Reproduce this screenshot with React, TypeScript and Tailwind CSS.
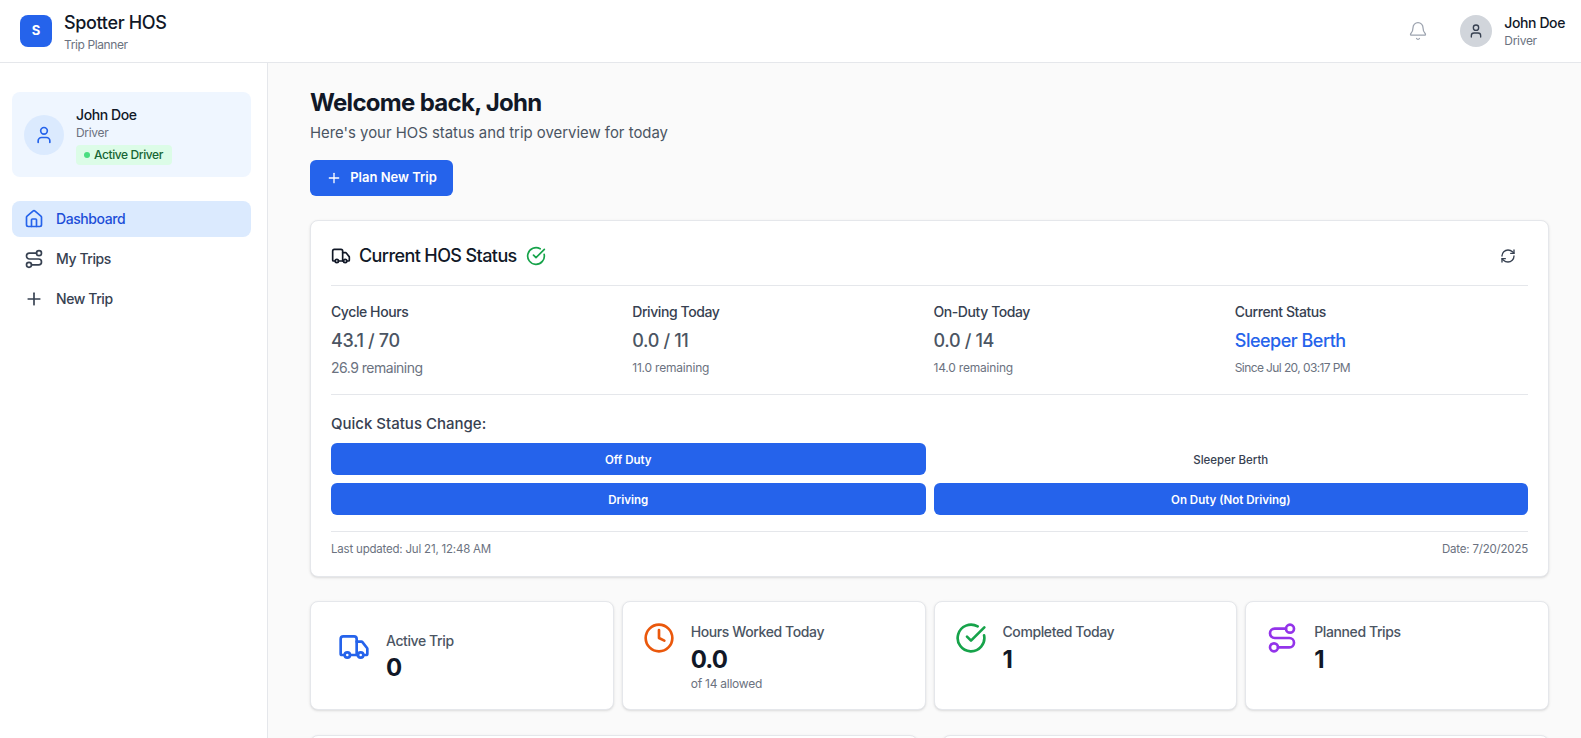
import { Bell, CircleCheckBig, Clock, House, Plus, RefreshCw, Route, Truck, User } from "lucide-react";

const font = { fontFamily: "Inter, 'Noto Sans', sans-serif" };

function Metric({ label, value, sub, big, blue, tight }: { label: string; value: string; sub: string; big?: boolean; blue?: boolean; tight?: boolean }) {
  return (
    <div>
      <div className="text-[14px] leading-5 font-medium tracking-[-0.42px] text-[#374151]">{label}</div>
      <div className={`mt-[5px] text-[18px] leading-7 font-medium ${blue ? "tracking-[-0.5px] text-[#2563eb]" : "tracking-[-0.35px] text-[#4b5563]"}`}>{value}</div>
      <div className={`mt-[3px] leading-5 text-[#6b7280] ${big ? "text-[14px] tracking-[-0.5px]" : tight ? "text-[12px] tracking-[-0.6px]" : "text-[12px] tracking-[-0.2px]"}`}>{sub}</div>
    </div>
  );
}

function Stat({ icon, label, value, sub, first }: { icon: React.ReactNode; label: string; value: string; sub?: string; first?: boolean }) {
  return (
    <div className={`flex h-[109px] items-start gap-4 rounded-lg border border-[#e5e7eb] bg-white shadow-sm ${first ? "px-[27px] pt-[29px]" : "px-5 pt-[20px]"}`}>
      {icon}
      <div>
        <div className="text-[14px] leading-5 font-medium tracking-[-0.4px] text-[#4b5563]">{label}</div>
        <div className={`text-[24px] leading-8 font-bold tracking-[-0.9px] text-[#111827] ${first ? "mt-[1px]" : "mt-[2px]"}`}>{value}</div>
        {sub && <div className="text-[12px] leading-4 tracking-[-0.25px] text-[#6b7280]">{sub}</div>}
      </div>
    </div>
  );
}

export default function App() {
  return (
    <div style={font} className="flex h-screen flex-col overflow-hidden bg-white">
      <header className="flex h-[63px] shrink-0 items-center justify-between border-b border-[#e5e7eb] bg-white pl-5 pr-[16px]">
        <div className="flex items-center gap-3">
          <div className="flex h-8 w-8 items-center justify-center rounded-lg bg-[#2563eb] text-[13px] font-bold text-white">S</div>
          <div>
            <div className="text-[18px] leading-7 font-medium tracking-[-0.35px] text-[#111827]">Spotter HOS</div>
            <div className="text-[12px] leading-4 tracking-[-0.4px] text-[#6b7280]">Trip Planner</div>
          </div>
        </div>
        <div className="flex items-center">
          <Bell className="mr-[32px] h-5 w-5 text-[#9ca3af]" strokeWidth={1.5} />
          <div className="mr-3 flex h-8 w-8 items-center justify-center rounded-full bg-[#d1d5db]">
            <User className="h-4 w-4 text-[#374151]" />
          </div>
          <div>
            <div className="text-[14px] leading-5 font-medium tracking-[-0.4px] text-[#111827]">John Doe</div>
            <div className="text-[12px] leading-4 tracking-[-0.3px] text-[#6b7280]">Driver</div>
          </div>
        </div>
      </header>
      <div className="flex min-h-0 flex-1">
        <aside className="w-[268px] shrink-0 border-r border-[#e5e7eb] bg-white pl-3 pr-4 pt-[29px]">
          <div className="flex h-[85px] items-center gap-3 rounded-lg bg-[#eff6ff] px-3">
            <div className="flex h-10 w-10 items-center justify-center rounded-full bg-[#dbeafe]">
              <User className="h-5 w-5 text-[#2563eb]" />
            </div>
            <div>
              <div className="text-[14px] leading-5 font-medium tracking-[-0.4px] text-[#111827]">John Doe</div>
              <div className="text-[12px] leading-4 tracking-[-0.3px] text-[#6b7280]">Driver</div>
              <div className="mt-[4px] flex h-5 w-[96px] items-center gap-[4px] rounded bg-[#dcfce7] pl-2 text-[12px] font-medium tracking-[-0.4px] text-[#166534]">
                <span className="h-[6px] w-[6px] rounded-full bg-[#4ade80]" />
                Active Driver
              </div>
            </div>
          </div>
          <nav className="mt-6 flex flex-col gap-1 text-[14px] font-medium tracking-[-0.42px]">
            <div className="flex h-9 items-center gap-3 rounded-lg bg-[#dbeafe] px-3 text-[#1d4ed8]">
              <House className="h-5 w-5 text-[#2563eb]" strokeWidth={2} />
              <span className="pb-[1px]">Dashboard</span>
            </div>
            <div className="flex h-9 items-center gap-3 rounded-lg px-3 text-[#374151]">
              <Route className="h-5 w-5" strokeWidth={2} />
              <span className="pb-[1px]">My Trips</span>
            </div>
            <div className="flex h-9 items-center gap-3 rounded-lg px-3 text-[#374151]">
              <Plus className="h-5 w-5" strokeWidth={2} />
              <span className="pb-[1px]">New Trip</span>
            </div>
          </nav>
        </aside>
        <main className="min-w-0 flex-1 bg-[#fafafa] pl-[42px] pr-[32px] pt-[24px]">
          <h1 className="text-[24px] leading-8 font-bold tracking-[-0.7px] text-[#111827]">Welcome back, John</h1>
          <p className="mt-[2px] text-[14.9px] leading-6 text-[#4b5563]">Here's your HOS status and trip overview for today</p>
          <button className="mt-[15px] flex h-9 w-[143px] items-center justify-center gap-2 rounded-md bg-[#2563eb] text-[13px] font-semibold text-white">
            <Plus className="h-4 w-4" strokeWidth={2} />
            Plan New Trip
          </button>

          <section className="mt-6 h-[357px] rounded-lg border border-[#e5e7eb] bg-white px-5 shadow-sm">
            <div className="flex h-[65px] items-center justify-between border-b border-[#e5e7eb] pt-[5px]">
              <div className="flex items-center gap-2">
                <Truck className="h-5 w-5 text-[#111827]" strokeWidth={2} />
                <span className="text-[18px] font-medium tracking-[-0.6px] text-[#111827]">Current HOS Status</span>
                <CircleCheckBig className="ml-[1px] h-5 w-5 text-[#16a34a]" strokeWidth={2} />
              </div>
              <RefreshCw className="mr-[12px] h-4 w-4 text-[#374151]" strokeWidth={2} />
            </div>
            <div className="grid h-[109px] grid-cols-4 gap-2 border-b border-[#e5e7eb] pt-[16px]">
              <Metric label="Cycle Hours" value="43.1 / 70" sub="26.9 remaining" big />
              <Metric label="Driving Today" value="0.0 / 11" sub="11.0 remaining" />
              <Metric label="On-Duty Today" value="0.0 / 14" sub="14.0 remaining" />
              <Metric label="Current Status" value="Sleeper Berth" sub="Since Jul 20, 03:17 PM" blue tight />
            </div>
            <div className="pt-[19px]">
              <div className="text-[15px] leading-5 font-medium text-[#374151]">Quick Status Change:</div>
              <div className="mt-[9px] grid grid-cols-2 gap-2 text-[11.5px] font-semibold">
                <div className="flex h-8 items-center justify-center rounded-md bg-[#2563eb] pt-[3px] text-white">Off Duty</div>
                <div className="flex h-8 items-center justify-center rounded-md pt-[3px] font-medium text-[#374151]">Sleeper Berth</div>
                <div className="flex h-8 items-center justify-center rounded-md bg-[#2563eb] pt-[3px] text-white">Driving</div>
                <div className="flex h-8 items-center justify-center rounded-md bg-[#2563eb] pt-[3px] text-white">On Duty (Not Driving)</div>
              </div>
            </div>
            <div className="mt-4 flex justify-between border-t border-[#e5e7eb] pt-[9px] text-[11.5px] leading-4 tracking-[-0.2px] text-[#6b7280]">
              <span>Last updated: Jul 21, 12:48 AM</span>
              <span>Date: 7/20/2025</span>
            </div>
          </section>

          <div className="mt-6 grid grid-cols-4 gap-2">
            <Stat first icon={<Truck className="h-8 w-8 shrink-0 text-[#2563eb]" strokeWidth={2} />} label="Active Trip" value="0" />
            <Stat icon={<Clock className="h-8 w-8 shrink-0 text-[#ea580c]" strokeWidth={2} />} label="Hours Worked Today" value="0.0" sub="of 14 allowed" />
            <Stat icon={<CircleCheckBig className="h-8 w-8 shrink-0 text-[#16a34a]" strokeWidth={2} />} label="Completed Today" value="1" />
            <Stat icon={<Route className="h-8 w-8 shrink-0 text-[#9333ea]" strokeWidth={2} />} label="Planned Trips" value="1" />
          </div>

          <div className="mt-[25px] grid grid-cols-2 gap-6">
            <div className="h-[200px] rounded-lg border border-[#e5e7eb] bg-white shadow-sm" />
            <div className="h-[200px] rounded-lg border border-[#e5e7eb] bg-white shadow-sm" />
          </div>
        </main>
      </div>
    </div>
  );
}
